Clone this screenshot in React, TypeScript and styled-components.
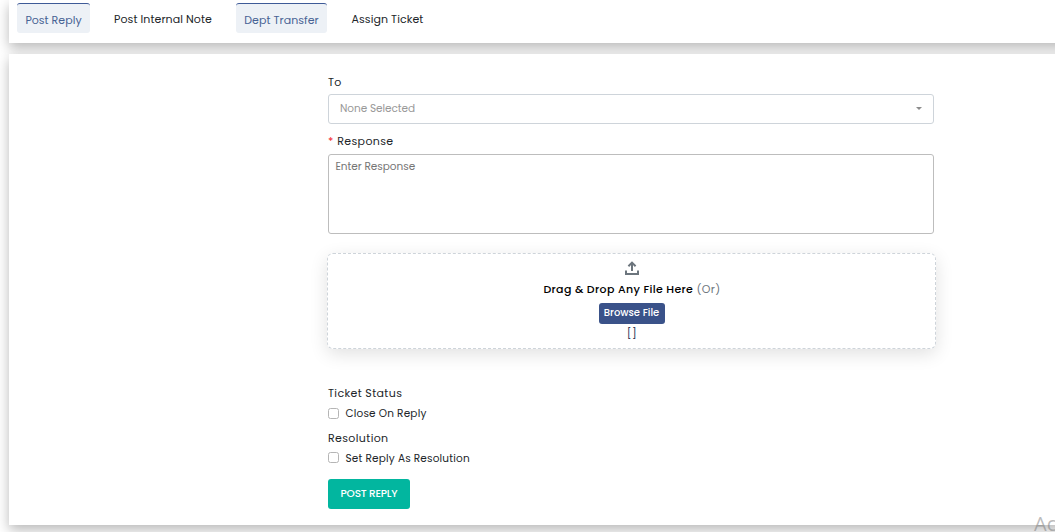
import React from "react";
import styled, { createGlobalStyle } from "styled-components";

const GlobalStyle = createGlobalStyle`
  * { box-sizing: border-box; }
  html, body { margin: 0; height: 532px; overflow: hidden; background: #fff; }
  body { font-family: Poppins, Inter, "Liberation Sans", sans-serif; color: #212529; }
`;

const Page = styled.main`
  height: 532px;
  padding-left: 9px;
  overflow: hidden;
  position: relative;
`;

const Panel = styled.section`
  width: 1070px;
  background: #fff;
  box-shadow: 0 5px 12px rgba(0, 0, 0, 0.28);
`;

const TabBar = styled(Panel)`
  display: flex;
  align-items: flex-start;
  height: 43px;
  padding: 3px 0 0 8px;
`;

const Tab = styled.button<{ $active?: boolean; $width: number; $spacing: number }>`
  width: ${(p) => p.$width}px;
  height: 30px;
  padding: ${(p) => (p.$active ? "3px 0 0" : "1px 0 0")};
  border: 0;
  border-top: 1px solid ${(p) => (p.$active ? "#3e5a97" : "transparent")};
  border-radius: 3px;
  background: ${(p) => (p.$active ? "#edf1f6" : "transparent")};
  color: ${(p) => (p.$active ? "#476294" : "#212529")};
  font: 400 11px/26px Poppins, Inter, sans-serif;
  letter-spacing: ${(p) => p.$spacing}px;
  white-space: nowrap;
`;

const FormPanel = styled(Panel)`
  height: 471px;
  margin-top: 11px;
  padding: 18px 0 0 319px;
`;

const Form = styled.form`
  width: 606px;
  display: flex;
  flex-direction: column;
`;

const Label = styled.label`
  font-size: 11px;
  line-height: 20px;
  letter-spacing: 0.37px;
`;

const Required = styled.span`
  color: #f5222d;
  margin-right: 3.5px;
`;

const Select = styled.div`
  display: flex;
  align-items: center;
  justify-content: space-between;
  height: 30px;
  margin: 2px 0 7px;
  padding: 0 11px 1px;
  border: 1px solid #ced4da;
  border-radius: 3px;
  color: #999;
  font-size: 10.5px;
  line-height: 26px;
  letter-spacing: -0.05px;
`;

const Caret = styled.span`
  border: 3px solid transparent;
  border-top-color: #8c8c8c;
  border-bottom: 0;
`;

const Response = styled.textarea`
  height: 80px;
  margin: 3px 0 19px;
  padding: 4px 6.5px;
  border: 1px solid #bdbdbd;
  border-radius: 3px;
  resize: none;
  outline: none;
  font: 400 10.5px/16px Poppins, Inter, sans-serif;
  letter-spacing: -0.03px;
  &::placeholder { color: #757575; opacity: 1; }
`;

const DropZone = styled.div`
  display: flex;
  flex-direction: column;
  align-items: center;
  width: 609px;
  height: 96px;
  margin: 0 0 34px -1px;
  padding-top: 7px;
  border: 1px dashed #ced4da;
  border-radius: 6px;
  box-shadow: 0 5px 18px rgba(0, 0, 0, 0.12);
`;

const UploadIcon = styled.svg`
  width: 14px;
  height: 14px;
  fill: none;
  stroke: #6c757d;
  stroke-width: 2;
`;

const DropText = styled.div`
  margin-top: 4px;
  padding-left: 1px;
  color: #000;
  font-size: 11px;
  font-weight: 500;
  line-height: 20px;
  letter-spacing: 0.35px;
  span { color: #6c757d; font-weight: 400; }
`;

const Browse = styled.button`
  width: 66px;
  height: 21px;
  margin-top: 4px;
  padding: 0 0 2px;
  border: 0;
  border-radius: 3px;
  background: #3a5289;
  color: #fff;
  font: 500 10px/18px Poppins, Inter, sans-serif;
  white-space: nowrap;
`;

const FileList = styled.div`
  padding-left: 1px;
  color: #34405a;
  font-size: 11px;
  line-height: 18px;
  letter-spacing: 0.5px;
`;

const CheckRow = styled.label<{ $gap: number }>`
  display: flex;
  align-items: center;
  height: 20px;
  margin-bottom: ${(p) => p.$gap}px;
  font-size: 10.5px;
  letter-spacing: 0.18px;
`;

const CheckText = styled.span`
  padding-top: 2px;
`;

const Check = styled.input<{ $lift?: number }>`
  appearance: none;
  width: 11px;
  height: 11px;
  margin: 0 6.5px ${(p) => p.$lift ?? 0}px 0;
  border: 1px solid #b5b5b5;
  border-radius: 2.5px;
  background: #fff;
`;

const Submit = styled.button`
  width: 82px;
  height: 30px;
  padding: 0 0 1px;
  border: 0;
  border-radius: 3px;
  background: #02b69f;
  color: #fff;
  font: 500 10.5px/20px Poppins, Inter, sans-serif;
  letter-spacing: -0.2px;
  white-space: nowrap;
`;

const Watermark = styled.div`
  position: absolute;
  left: 1034px;
  top: 512px;
  color: rgba(120, 120, 120, 0.5);
  font: 400 20px/24px "Open Sans", sans-serif;
  white-space: nowrap;
`;

export default function App() {
  return (
    <Page>
      <GlobalStyle />
      <TabBar>
        <Tab $active $width={73} $spacing={0.03}>Post Reply</Tab>
        <Tab $width={146} $spacing={0.08}>Post Internal Note</Tab>
        <Tab $active $width={91} $spacing={0.05}>Dept Transfer</Tab>
        <Tab $width={121} $spacing={0.08}>Assign Ticket</Tab>
      </TabBar>
      <FormPanel>
        <Form>
          <Label>To</Label>
          <Select>None Selected<Caret /></Select>
          <Label><Required>*</Required>Response</Label>
          <Response placeholder="Enter Response" />
          <DropZone>
            <UploadIcon viewBox="0 0 14 14">
              <path d="M7 10V1.8M3.4 5.2 7 1.6 10.6 5.2M1 9.6V13h12V9.6" />
            </UploadIcon>
            <DropText>Drag &amp; Drop Any File Here <span>(Or)</span></DropText>
            <Browse type="button">Browse File</Browse>
            <FileList>[]</FileList>
          </DropZone>
          <Label>Ticket Status</Label>
          <CheckRow $gap={5}><Check type="checkbox" /><CheckText>Close On Reply</CheckText></CheckRow>
          <Label>Resolution</Label>
          <CheckRow $gap={11}><Check type="checkbox" $lift={2} /><CheckText>Set Reply As Resolution</CheckText></CheckRow>
          <Submit type="button">POST REPLY</Submit>
        </Form>
      </FormPanel>
      <Watermark>Ac</Watermark>
    </Page>
  );
}
